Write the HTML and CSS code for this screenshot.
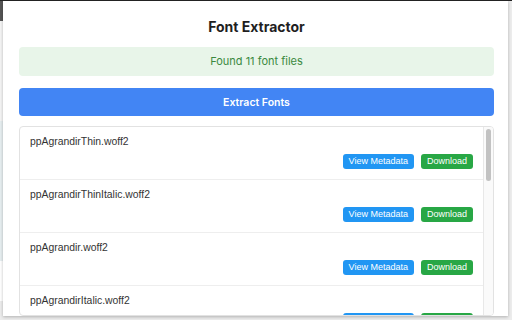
FILE: index.html
```html
<!DOCTYPE html>
<html>
<head>
    <title>Font Extractor</title>
    <link rel="stylesheet" href="styles.css">
</head>
<body>
    <div class="page-edge"></div>
    <div class="popup">
        <h1 class="title">Font Extractor</h1>
        <div class="status">Found 11 font files</div>
        <button class="extract-btn">Extract Fonts</button>
        <div class="font-list">
            <div class="items">
                <div class="font-item">
                    <div class="font-name">ppAgrandirThin.woff2</div>
                    <div class="actions">
                        <button class="meta-btn">View Metadata</button>
                        <button class="dl-btn">Download</button>
                    </div>
                </div>
                <div class="font-item">
                    <div class="font-name">ppAgrandirThinItalic.woff2</div>
                    <div class="actions">
                        <button class="meta-btn">View Metadata</button>
                        <button class="dl-btn">Download</button>
                    </div>
                </div>
                <div class="font-item">
                    <div class="font-name">ppAgrandir.woff2</div>
                    <div class="actions">
                        <button class="meta-btn">View Metadata</button>
                        <button class="dl-btn">Download</button>
                    </div>
                </div>
                <div class="font-item">
                    <div class="font-name">ppAgrandirItalic.woff2</div>
                    <div class="actions">
                        <button class="meta-btn">View Metadata</button>
                        <button class="dl-btn">Download</button>
                    </div>
                </div>
            </div>
            <div class="scrollbar">
                <div class="thumb"></div>
            </div>
        </div>
    </div>
</body>
</html>
```

FILE: styles.css
```css
body {
    margin: 0;
    width: 512px;
    height: 320px;
    overflow: hidden;
    display: flex;
    align-items: flex-start;
    background-color: #ececec;
    border-top: 1px solid #222;
    box-sizing: border-box;
    font-family: Inter, "Noto Sans", sans-serif;
}
.page-edge {
    width: 3px;
    height: 300px;
    background: linear-gradient(#555 0 20px, #f4f4f4 20px 120px, #e6eef0 120px 260px, #fff 260px);
}
.popup {
    width: 505px;
    height: 315px;
    box-sizing: border-box;
    padding: 0 14px 0 16px;
    background-color: #fff;
    box-shadow: 0 1px 3px rgba(0, 0, 0, 0.25);
    display: flex;
    flex-direction: column;
}
.title {
    margin: 17px 0 11px;
    font-size: 14px;
    line-height: 18px;
    font-weight: 700;
    color: #1f1f1f;
    text-align: center;
}
.status {
    height: 29px;
    line-height: 29px;
    border-radius: 4px;
    background-color: #e8f5e9;
    color: #3b8a3f;
    font-size: 11px;
    text-align: center;
    margin-bottom: 12px;
}
.extract-btn {
    height: 28px;
    border: none;
    border-radius: 4px;
    background-color: #4285f4;
    color: #fff;
    font-family: Inter, "Noto Sans", sans-serif;
    font-size: 10.5px;
    font-weight: 600;
    margin-bottom: 10px;
}
.font-list {
    height: 188px;
    border: 1px solid #e2e2e2;
    border-radius: 4px;
    overflow: hidden;
    display: flex;
}
.items {
    flex: 1;
}
.scrollbar {
    width: 10px;
    background-color: #fafafa;
    border-left: 1px solid #e8e8e8;
    padding: 2px 2px 0 2px;
    box-sizing: border-box;
}
.thumb {
    height: 52px;
    border-radius: 3px;
    background-color: #c2c2c2;
}
.font-item {
    padding: 8px 10px 10px 10px;
    border-bottom: 1px solid #eee;
}
.font-name {
    font-family: "Liberation Sans", Arial, sans-serif;
    font-size: 10.4px;
    line-height: 14px;
    color: #333;
}
.actions {
    display: flex;
    justify-content: flex-end;
    gap: 7px;
    margin-top: 5px;
}
.actions button {
    height: 15px;
    padding: 0 6px;
    border: none;
    border-radius: 3px;
    color: #fff;
    font-family: "Liberation Sans", Arial, sans-serif;
    font-size: 9px;
    line-height: 15px;
}
.meta-btn {
    background-color: #2196f3;
}
.dl-btn {
    background-color: #28a745;
}
```
